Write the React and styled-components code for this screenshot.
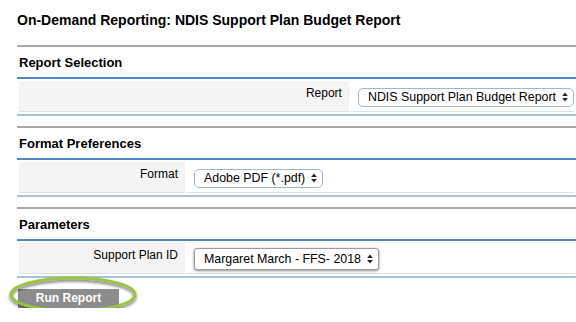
import React from "react";
import styled, { createGlobalStyle } from "styled-components";

const GlobalStyle = createGlobalStyle`
  html, body {
    margin: 0;
    padding: 0;
    background: #fff;
  }
  body {
    font-family: "Liberation Sans", Arial, Helvetica, sans-serif;
    color: #000;
    overflow: hidden;
  }
`;

const Page = styled.div`
  padding: 11px 0 0 17px;
`;

const Title = styled.h1`
  margin: 0;
  height: 34px;
  font-size: 14px;
  line-height: 18px;
  font-weight: bold;
`;

const Section = styled.section`
  border-top: 2px solid #a9a9a9;
  border-bottom: 2px solid #aac1d8;
  margin-bottom: 10px;
`;

const SectionHeader = styled.h2`
  margin: 0;
  height: 22px;
  padding: 8px 0 0 2px;
  font-size: 13px;
  line-height: 16px;
  font-weight: bold;
  border-bottom: 2px solid #4d87c7;
`;

const Table = styled.table`
  width: 100%;
  border-collapse: separate;
  border-spacing: 2px;
`;

const LabelCell = styled.td`
  width: ${(p) => p.$width}px;
  box-sizing: border-box;
  height: 31px;
  padding: 5px 7px 0 0;
  background: #f4f4f4;
  border-bottom: 1px solid #dde2e8;
  text-align: right;
  vertical-align: top;
  font-size: 12px;
  line-height: 14px;
`;

const ValueCell = styled.td`
  height: 31px;
  box-sizing: border-box;
  padding: 6px 0 0 7px;
  border-bottom: 1px solid #dde2e8;
  vertical-align: top;
`;

const SelectBox = styled.div`
  display: inline-flex;
  align-items: center;
  gap: 6px;
  box-sizing: border-box;
  height: ${(p) => (p.$raised ? 22 : 19)}px;
  padding: 0 5px 0 9px;
  margin-top: ${(p) => (p.$raised ? -1 : 0)}px;
  border: 1px solid ${(p) => (p.$raised ? "#9a9a9a" : "#9db7d2")};
  border-radius: ${(p) => (p.$raised ? 3 : 5)}px;
  background: #fff;
  box-shadow: ${(p) => (p.$raised ? "0 1px 3px rgba(0,0,0,0.45)" : "none")};
  font-size: 12.4px;
  line-height: 14px;
  white-space: nowrap;
  color: #000;
`;

const Arrows = () => (
  <svg width="6" height="10" viewBox="0 0 6 10">
    <path d="M3 0.5 L5.8 4 L0.2 4 Z" fill="#222" />
    <path d="M3 9.5 L5.8 6 L0.2 6 Z" fill="#222" />
  </svg>
);

const Select = ({ children, raised }) => (
  <SelectBox $raised={raised}>
    <span>{children}</span>
    <Arrows />
  </SelectBox>
);

const Actions = styled.div`
  display: flex;
  padding: 1px 0 0 1px;
`;

const ButtonWrap = styled.div`
  position: relative;
  display: flex;
`;

const RunButton = styled.button`
  width: 101px;
  height: 19px;
  border: none;
  padding: 0;
  background: #8c8c8c;
  color: #fff;
  font-family: inherit;
  font-size: 12px;
  font-weight: bold;
  line-height: 19px;
`;

const Highlight = styled.svg`
  position: absolute;
  left: -9px;
  top: -13px;
  pointer-events: none;
  overflow: visible;
`;

const Marker = () => (
  <Highlight width="130" height="40" viewBox="0 0 130 40">
    <defs>
      <filter id="sh" x="-20%" y="-40%" width="140%" height="180%">
        <feDropShadow dx="0" dy="2" stdDeviation="1.6" floodColor="#000" floodOpacity="0.55" />
      </filter>
    </defs>
    <ellipse cx="64" cy="18.5" rx="62" ry="16.5" fill="none" stroke="#9cc441" strokeWidth="3" filter="url(#sh)" />
  </Highlight>
);

const sections = [
  { title: "Report Selection", label: "Report", value: "NDIS Support Plan Budget Report", width: 330 },
  { title: "Format Preferences", label: "Format", value: "Adobe PDF (*.pdf)", width: 166 },
  { title: "Parameters", label: "Support Plan ID", value: "Margaret March - FFS- 2018", width: 166, raised: true },
];

export default function App() {
  return (
    <>
      <GlobalStyle />
      <Page>
        <Title>On-Demand Reporting: NDIS Support Plan Budget Report</Title>
        {sections.map((s) => (
          <Section key={s.title}>
            <SectionHeader>{s.title}</SectionHeader>
            <Table>
              <tbody>
                <tr>
                  <LabelCell $width={s.width}>{s.label}</LabelCell>
                  <ValueCell>
                    <Select raised={s.raised}>{s.value}</Select>
                  </ValueCell>
                </tr>
              </tbody>
            </Table>
          </Section>
        ))}
        <Actions>
          <ButtonWrap>
            <RunButton>Run Report</RunButton>
            <Marker />
          </ButtonWrap>
        </Actions>
      </Page>
    </>
  );
}
